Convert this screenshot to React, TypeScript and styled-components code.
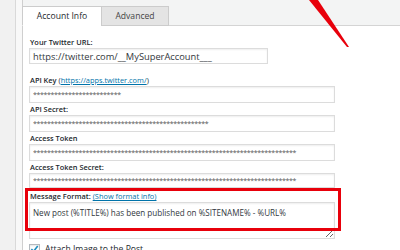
import React from "react";
import styled, { createGlobalStyle } from "styled-components";

const GlobalStyle = createGlobalStyle`
  html, body {
    margin: 0;
    padding: 0;
    background: #f1f1f1;
  }
  body {
    font-family: "Open Sans", "Noto Sans", sans-serif;
    color: #23282d;
  }
`;

const Page = styled.div`
  position: relative;
  display: flex;
  width: 400px;
  height: 250px;
  overflow: hidden;
`;

const Gutter = styled.div`
  flex: none;
  width: 15px;
  background: #f1f1f1;
  border-right: 1px solid #d9d9d9;
`;

const Margin = styled.div`
  flex: none;
  width: 6px;
  background: #f8f8f8;
`;

const Panel = styled.div`
  flex: 1;
  display: flex;
  flex-direction: column;
  border-left: 1px solid #cfcfcf;
  background: #fff;
`;

const TabBar = styled.ul`
  flex: none;
  display: flex;
  align-items: flex-end;
  box-sizing: border-box;
  height: 26px;
  margin: 0;
  padding: 0;
  list-style: none;
  background: #f3f4f4;
  border-bottom: 1px solid #d4d4d4;
`;

const Tab = styled.li<{ $active?: boolean; $width: number }>`
  box-sizing: border-box;
  width: ${(p) => p.$width}px;
  height: 20px;
  margin: 0 0 -1px -1px;
  display: flex;
  align-items: center;
  justify-content: center;
  border: 1px solid #cccccc;
  border-bottom-color: ${(p) => (p.$active ? "#fff" : "#cccccc")};
  background: ${(p) => (p.$active ? "#fff" : "#e4e4e4")};
  color: ${(p) => (p.$active ? "#23282d" : "#444")};
  font-size: 8.6px;
`;

const Content = styled.div`
  flex: none;
  padding: 10px 0 0 6px;
`;

const Field = styled.div<{ $gap?: number }>`
  margin-top: ${(p) => p.$gap ?? 0}px;
`;

const Label = styled.div`
  font-size: 7.4px;
  font-weight: 600;
  line-height: 12px;
  padding-left: 1px;
  color: #23282d;

  a {
    font-weight: 400;
    color: #0073aa;
    text-decoration: underline;
  }
`;

const Paren = styled.span`
  font-weight: 400;
`;

const TextInput = styled.input<{ $width: number; $height?: number }>`
  display: block;
  box-sizing: border-box;
  width: ${(p) => p.$width}px;
  height: ${(p) => p.$height ?? 17}px;
  margin: 0;
  padding: 0 3px;
  border: 1px solid #dcdcdc;
  box-shadow: inset 0 1px 2px rgba(0, 0, 0, 0.07);
  background: #fff;
  color: #32373c;
  font-family: "Open Sans", "Noto Sans", sans-serif;
  font-size: 9.3px;
  outline: none;
`;

const Secret = styled(TextInput)`
  font-size: 7px;
  letter-spacing: -0.35px;
  color: #555;
`;

const TextArea = styled.textarea`
  display: block;
  box-sizing: border-box;
  width: 306px;
  height: 37px;
  margin: 0;
  padding: 4px 3px;
  border: 1px solid #dcdcdc;
  box-shadow: inset 0 1px 2px rgba(0, 0, 0, 0.07);
  background: #fff;
  color: #32373c;
  font-family: "Open Sans", "Noto Sans", sans-serif;
  font-size: 8.1px;
  line-height: 11px;
  outline: none;
`;

const CheckRow = styled.label`
  display: flex;
  align-items: center;
  gap: 5px;
  margin-top: 4px;
  font-size: 8.6px;
  color: #23282d;
`;

const CheckBox = styled.span`
  display: flex;
  align-items: center;
  justify-content: center;
  box-sizing: border-box;
  width: 11px;
  height: 11px;
  border: 1px solid #b4b9be;
  background: #fff;
  box-shadow: inset 0 1px 2px rgba(0, 0, 0, 0.1);
`;

const Highlight = styled.div`
  position: absolute;
  left: 25px;
  top: 188px;
  width: 316px;
  height: 43px;
  box-sizing: border-box;
  border: 3px solid #e8000b;
  pointer-events: none;
`;

const Arrow = styled.svg`
  position: absolute;
  left: 300px;
  top: 0;
`;

const stars = (n: number) => "*".repeat(n);

const App = () => {
  return (
    <Page>
      <GlobalStyle />
      <Gutter />
      <Margin />
      <Panel>
        <TabBar>
          <Tab $active $width={80}>Account Info</Tab>
          <Tab $width={68}>Advanced</Tab>
        </TabBar>
        <Content>
          <Field>
            <Label>Your Twitter URL:</Label>
            <TextInput $width={239} $height={16} readOnly value="https://twitter.com/__MySuperAccount___" />
          </Field>
          <Field $gap={10}>
            <Label>
              API Key <Paren>(</Paren>
              <a href="#">https://apps.twitter.com/</a>
              <Paren>)</Paren>
            </Label>
            <Secret $width={306} readOnly value={stars(25)} />
          </Field>
          <Field>
            <Label>API Secret:</Label>
            <Secret $width={306} readOnly value={stars(50)} />
          </Field>
          <Field>
            <Label>Access Token</Label>
            <Secret $width={306} readOnly value={stars(75)} />
          </Field>
          <Field>
            <Label>Access Token Secret:</Label>
            <Secret $width={306} $height={15} readOnly value={stars(75)} />
          </Field>
          <Field $gap={2}>
            <Label>
              Message Format: <a href="#">(Show format info)</a>
            </Label>
            <TextArea readOnly value="New post (%TITLE%) has been published on %SITENAME% - %URL%" />
          </Field>
          <CheckRow>
            <CheckBox>
              <svg width="10" height="10" viewBox="0 0 10 10">
                <path d="M1.5 5.2 L4 7.6 L8.6 1.8" fill="none" stroke="#1e8cbe" strokeWidth="1.8" />
              </svg>
            </CheckBox>
            Attach Image to the Post
          </CheckRow>
        </Content>
      </Panel>
      <Highlight />
      <Arrow width="60" height="50" viewBox="0 0 60 50">
        <polygon points="9,0 18,0 49,47 47,47" fill="#e8000b" />
      </Arrow>
    </Page>
  );
};

export default App;
